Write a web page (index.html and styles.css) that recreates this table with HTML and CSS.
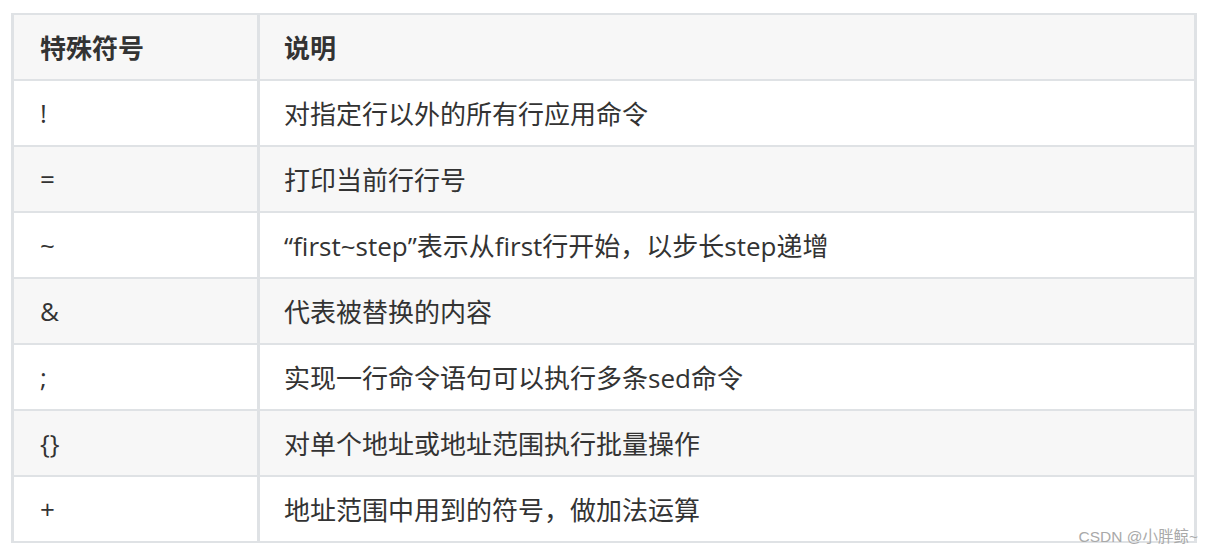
FILE: index.html
```html
<!DOCTYPE html>
<html lang="zh">
<head>
<meta charset="utf-8">
<link rel="stylesheet" href="styles.css">
</head>
<body>
<div class="page">
  <table class="sym-table">
    <thead>
      <tr><th class="c1">特殊符号</th><th>说明</th></tr>
    </thead>
    <tbody>
      <tr><td class="c1">!</td><td>对指定行以外的所有行应用命令</td></tr>
      <tr><td class="c1">=</td><td>打印当前行行号</td></tr>
      <tr><td class="c1">~</td><td>“first~step”表示从first行开始，以步长step递增</td></tr>
      <tr><td class="c1">&amp;</td><td>代表被替换的内容</td></tr>
      <tr><td class="c1">;</td><td>实现一行命令语句可以执行多条sed命令</td></tr>
      <tr><td class="c1">{}</td><td>对单个地址或地址范围执行批量操作</td></tr>
      <tr><td class="c1">+</td><td>地址范围中用到的符号，做加法运算</td></tr>
    </tbody>
  </table>
  <div class="watermark">CSDN @小胖鲸~</div>
</div>
</body>
</html>
```
FILE: styles.css
```css
html, body {
  margin: 0;
  padding: 0;
  background: #ffffff;
}
.page {
  position: relative;
  width: 1214px;
  height: 555px;
  padding: 13px 0 0 11px;
  box-sizing: border-box;
}
.sym-table {
  border-collapse: collapse;
  width: 1186px;
  font-family: "Open Sans", "Noto Sans CJK SC", sans-serif;
  font-size: 26px;
  color: #333333;
}
.sym-table th,
.sym-table td {
  border-top: 2px solid #dfe2e5;
  border-bottom: 2px solid #dfe2e5;
  border-left: 3px solid #dfe2e5;
  border-right: 3px solid #dfe2e5;
  text-align: left;
  padding: 0 0 0 24px;
  height: 66px;
  box-sizing: border-box;
  white-space: nowrap;
}
.sym-table th {
  font-weight: bold;
  height: 66px;
  background: #f7f7f7;
}
.sym-table th.c1,
.sym-table td.c1 {
  width: 246px;
  padding-left: 26px;
}
.sym-table tbody tr:nth-child(even) td {
  background: #f7f7f7;
}
.sym-table tbody tr:nth-child(odd) td {
  background: #ffffff;
}
.watermark {
  position: absolute;
  right: 16px;
  top: 527px;
  font-family: "Liberation Sans", "Noto Sans CJK SC", sans-serif;
  font-size: 15.5px;
  color: #a9a9a9;
  line-height: 20px;
}
```
